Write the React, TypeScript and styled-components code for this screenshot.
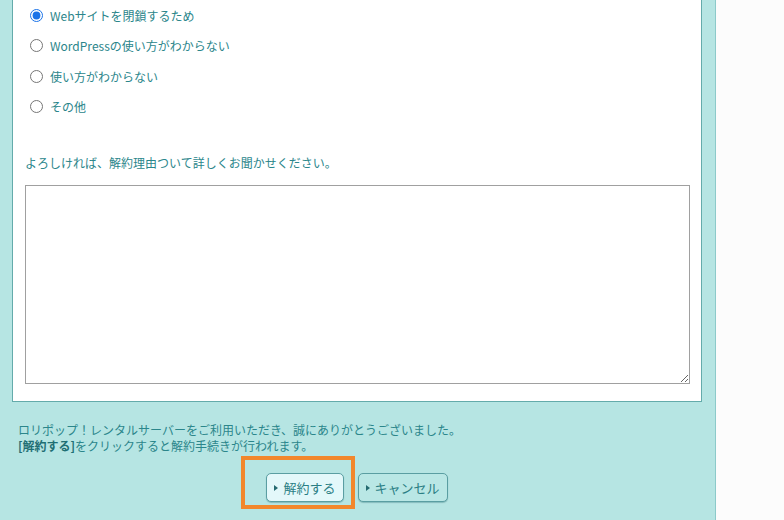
import React from "react";
import styled, { createGlobalStyle } from "styled-components";

const GlobalStyle = createGlobalStyle`
  html, body {
    margin: 0;
    padding: 0;
    background: #fcfcfc;
    font-family: "Noto Sans CJK JP", "Noto Sans", sans-serif;
  }
`;

const Page = styled.div`
  display: flex;
  height: 520px;
  overflow: hidden;
`;

const Panel = styled.div`
  width: 716px;
  flex: none;
  background: #b6e5e3;
  border-right: 1px solid #8ccaca;
  padding: 0 13px 0 12px;
  box-sizing: border-box;
  display: flex;
  flex-direction: column;
`;

const FormBox = styled.div`
  background: #fff;
  border: 1px solid #64abab;
  border-top: none;
  padding: 0 12px 17px 12px;
`;

const RadioList = styled.div`
  display: flex;
  flex-direction: column;
  padding: 0 0 0 5px;
`;

const RadioRow = styled.label`
  display: flex;
  align-items: center;
  height: 30.5px;
  font-size: 12px;
  color: #2b868b;
  gap: 7px;

  input {
    margin: 0;
    width: 13px;
    height: 13px;
    accent-color: #1a73e8;
  }
`;

const Prompt = styled.p`
  margin: 33px 0 14px 0;
  font-size: 12px;
  line-height: 16px;
  color: #2b868b;
`;

const Reason = styled.textarea`
  display: block;
  width: 665px;
  height: 199px;
  box-sizing: border-box;
  border: 1px solid #a0a0a0;
  margin: 0;
  font-family: inherit;
`;

const Notice = styled.div`
  margin: 20px 0 0 6px;
  font-size: 12px;
  line-height: 16px;
  color: #2b868b;

  strong {
    color: #1f6f74;
  }
`;

const Actions = styled.div`
  display: flex;
  justify-content: center;
  gap: 14px;
  margin-top: 19px;
`;

const ButtonWrap = styled.div`
  position: relative;
`;

const Highlight = styled.div`
  position: absolute;
  left: -25px;
  top: -17px;
  width: 114px;
  height: 53px;
  box-sizing: border-box;
  border: 4px solid #f2872c;
  pointer-events: none;
`;

const Button = styled.button<{ $light?: boolean }>`
  display: flex;
  align-items: center;
  gap: 5px;
  height: 29px;
  padding: 0 7px 0 7px;
  border: 1px solid #5a9ea2;
  border-radius: 5px;
  background: ${({ $light }) => ($light ? "#e3f8fa" : "#b9e7e5")};
  color: #2a7e84;
  font-family: inherit;
  font-size: 13px;
  box-shadow: 0 1px 1px rgba(40, 110, 115, 0.35);
  cursor: pointer;

  &::before {
    content: "";
    border-left: 4px solid #256a70;
    border-top: 3.5px solid transparent;
    border-bottom: 3.5px solid transparent;
  }
`;

const reasons = [
  "Webサイトを閉鎖するため",
  "WordPressの使い方がわからない",
  "使い方がわからない",
  "その他",
];

export default function App() {
  return (
    <>
      <GlobalStyle />
      <Page>
        <Panel>
          <FormBox>
            <RadioList>
              {reasons.map((r, i) => (
                <RadioRow key={r}>
                  <input type="radio" name="reason" defaultChecked={i === 0} />
                  {r}
                </RadioRow>
              ))}
            </RadioList>
            <Prompt>よろしければ、解約理由ついて詳しくお聞かせください。</Prompt>
            <Reason />
          </FormBox>
          <Notice>
            ロリポップ！レンタルサーバーをご利用いただき、誠にありがとうございました。
            <br />
            <strong>[解約する]</strong>をクリックすると解約手続きが行われます。
          </Notice>
          <Actions>
            <ButtonWrap>
              <Highlight />
              <Button $light>解約する</Button>
            </ButtonWrap>
            <Button>キャンセル</Button>
          </Actions>
        </Panel>
      </Page>
    </>
  );
}
